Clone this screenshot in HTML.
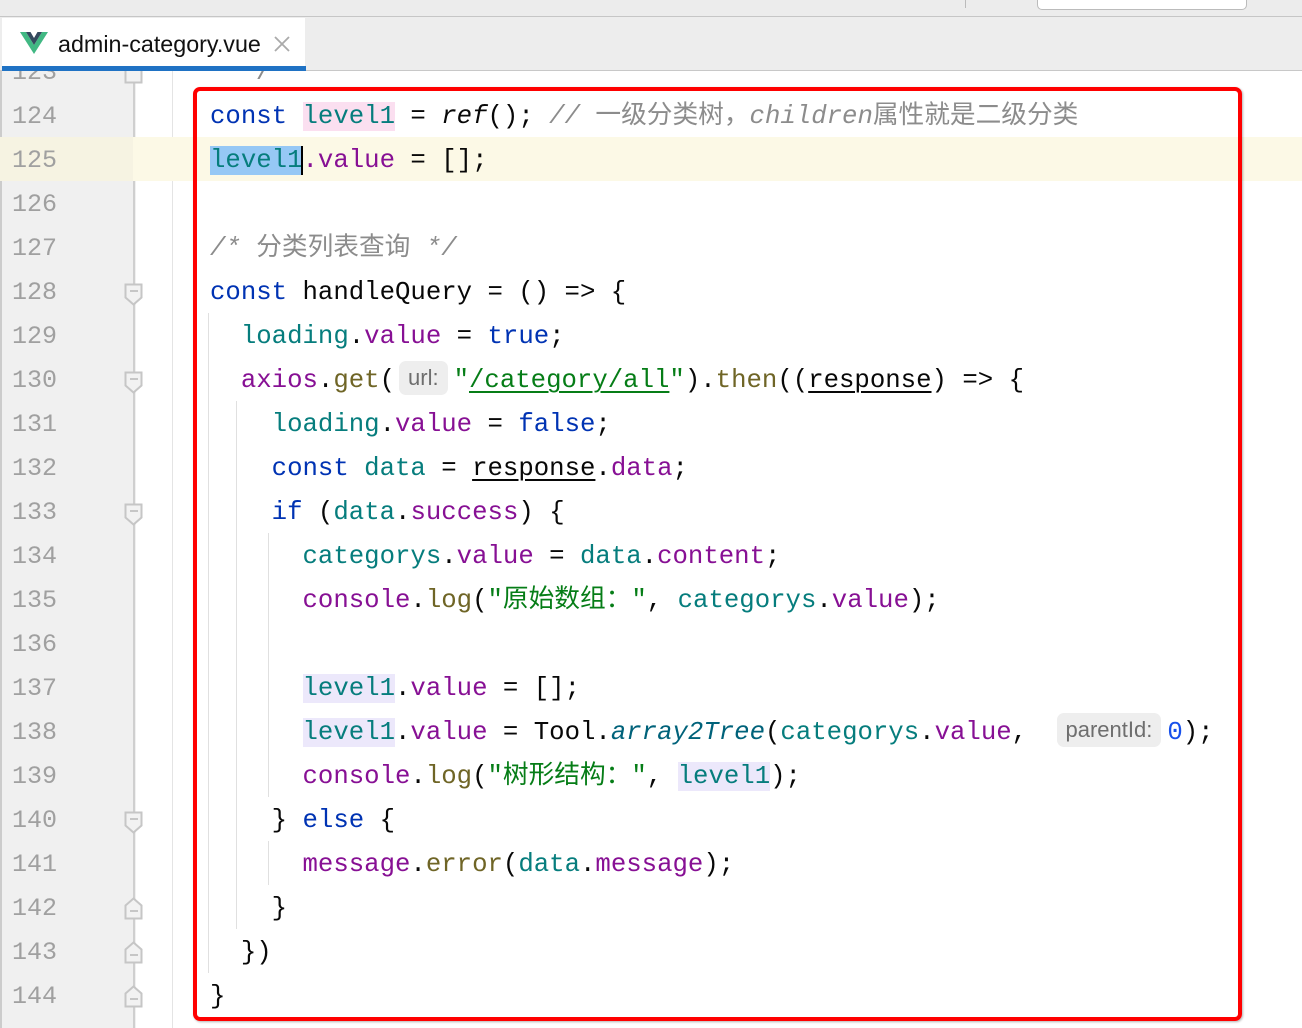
<!DOCTYPE html>
<html><head><meta charset="utf-8"><style>
body{margin:0;width:1302px;height:1028px;overflow:hidden;background:#fff;position:relative;font-family:"Liberation Mono","Noto Sans CJK SC",monospace;}
.a{position:absolute}
.ln{position:absolute;left:12px;width:60px;font-size:25px;color:#a0a0a0;line-height:44px;height:44px}
.c{position:absolute;left:210px;white-space:pre;font-size:25.7px;line-height:44px;height:44px;color:#080808}
.k{color:#0033b3}.t{color:#067d7d}.p{color:#871094}.f{color:#6f6526}.s{color:#067d17}.cm{color:#8c8c8c;font-style:italic}.cm b{font-weight:normal;font-style:normal}.i{font-style:italic}.n{color:#1750eb}
.h{display:inline-block;font-family:"Liberation Sans",sans-serif;font-size:22px;color:#6e6e6e;background:#eeeeee;border-radius:7px;line-height:34px;padding:0 9px;vertical-align:2px;margin:0 6px 0 4px}
.u{text-decoration:underline;text-decoration-thickness:2px;text-underline-offset:4px}
.g{position:absolute;width:1px;background:#e0e0e0}
.fd{position:absolute;left:124px}
</style></head><body>
<!-- editor -->
<div class="a" style="left:0;top:71px;width:134px;height:957px;background:#f0f0f0;border-left:2px solid #ccc"></div>
<div class="a" style="left:133px;top:71px;width:2px;height:957px;background:#cfcfcf"></div>
<div class="a" style="left:172px;top:71px;width:1px;height:957px;background:#e4e4e4"></div>
<div class="a" style="left:0;top:137px;width:1302px;height:44px;background:#fcf9e6"></div>
<div class="a" style="left:0;top:137px;width:133px;height:44px;background:#f6f3e2"></div>
<div class="ln" style="top:51px">123</div>
<div class="ln" style="top:95px">124</div><div class="ln" style="top:139px">125</div><div class="ln" style="top:183px">126</div><div class="ln" style="top:227px">127</div><div class="ln" style="top:271px">128</div><div class="ln" style="top:315px">129</div><div class="ln" style="top:359px">130</div><div class="ln" style="top:403px">131</div><div class="ln" style="top:447px">132</div><div class="ln" style="top:491px">133</div><div class="ln" style="top:535px">134</div><div class="ln" style="top:579px">135</div><div class="ln" style="top:623px">136</div><div class="ln" style="top:667px">137</div><div class="ln" style="top:711px">138</div><div class="ln" style="top:755px">139</div><div class="ln" style="top:799px">140</div><div class="ln" style="top:843px">141</div><div class="ln" style="top:887px">142</div><div class="ln" style="top:931px">143</div><div class="ln" style="top:975px">144</div>
<svg class="fd" style="top:283px" width="20" height="24"><path d="M1.5 1.5h16v13l-8 7-8-7z" fill="#f2f2f2" stroke="#c6c6c6" stroke-width="2"/><path d="M6 8h8" stroke="#c6c6c6" stroke-width="2"/></svg>
<svg class="fd" style="top:371px" width="20" height="24"><path d="M1.5 1.5h16v13l-8 7-8-7z" fill="#f2f2f2" stroke="#c6c6c6" stroke-width="2"/><path d="M6 8h8" stroke="#c6c6c6" stroke-width="2"/></svg>
<svg class="fd" style="top:503px" width="20" height="24"><path d="M1.5 1.5h16v13l-8 7-8-7z" fill="#f2f2f2" stroke="#c6c6c6" stroke-width="2"/><path d="M6 8h8" stroke="#c6c6c6" stroke-width="2"/></svg>
<svg class="fd" style="top:811px" width="20" height="24"><path d="M1.5 1.5h16v13l-8 7-8-7z" fill="#f2f2f2" stroke="#c6c6c6" stroke-width="2"/><path d="M6 8h8" stroke="#c6c6c6" stroke-width="2"/></svg>
<svg class="fd" style="top:896px" width="20" height="24"><path d="M1.5 22.5h16v-13l-8-7-8 7z" fill="#f2f2f2" stroke="#c6c6c6" stroke-width="2"/><path d="M6 15h8" stroke="#c6c6c6" stroke-width="2"/></svg>
<svg class="fd" style="top:940px" width="20" height="24"><path d="M1.5 22.5h16v-13l-8-7-8 7z" fill="#f2f2f2" stroke="#c6c6c6" stroke-width="2"/><path d="M6 15h8" stroke="#c6c6c6" stroke-width="2"/></svg>
<svg class="fd" style="top:984px" width="20" height="24"><path d="M1.5 22.5h16v-13l-8-7-8 7z" fill="#f2f2f2" stroke="#c6c6c6" stroke-width="2"/><path d="M6 15h8" stroke="#c6c6c6" stroke-width="2"/></svg>
<svg class="fd" style="top:60px" width="20" height="24"><path d="M1.5 22.5h16v-13l-8-7-8 7z" fill="#f2f2f2" stroke="#c6c6c6" stroke-width="2"/></svg>
<!-- indent guides -->
<div class="g" style="left:208px;top:313px;height:660px"></div>
<div class="g" style="left:236px;top:401px;height:528px"></div>
<div class="g" style="left:268px;top:533px;height:264px"></div>
<div class="g" style="left:268px;top:841px;height:44px"></div>
<!-- code -->
<div class="c" style="top:51px;left:225px;color:#8c8c8c"> */</div>
<div class="c" style="top:95px"><span class="k">const</span> <span class="t" style="background:#fbdff0">level1</span> = <span class="i">ref</span>(); <span class="cm">// <b>一级分类树，</b>children<b>属性就是二级分类</b></span></div>
<div class="c" style="top:139px"><span class="t" style="background:#96c8f5">level1</span><span style="border-left:2px solid #000;margin-left:-2px"></span><span class="p">.value</span> = [];</div>
<div class="c cm" style="top:227px">/* <b>分类列表查询</b> */</div>
<div class="c" style="top:271px"><span class="k">const</span> handleQuery = () =&gt; {</div>
<div class="c" style="top:315px">  <span class="t">loading</span>.<span class="p">value</span> = <span class="k">true</span>;</div>
<div class="c" style="top:359px">  <span class="p">axios</span>.<span class="f">get</span>(<span class="h">url:</span><span class="s">"<span class="u">/category/all</span>"</span>).<span class="f">then</span>((<span class="u">response</span>) =&gt; {</div>
<div class="c" style="top:403px">    <span class="t">loading</span>.<span class="p">value</span> = <span class="k">false</span>;</div>
<div class="c" style="top:447px">    <span class="k">const</span> <span class="t">data</span> = <span class="u">response</span>.<span class="p">data</span>;</div>
<div class="c" style="top:491px">    <span class="k">if</span> (<span class="t">data</span>.<span class="p">success</span>) {</div>
<div class="c" style="top:535px">      <span class="t">categorys</span>.<span class="p">value</span> = <span class="t">data</span>.<span class="p">content</span>;</div>
<div class="c" style="top:579px">      <span class="p">console</span>.<span class="f">log</span>(<span class="s">"原始数组："</span>, <span class="t">categorys</span>.<span class="p">value</span>);</div>
<div class="c" style="top:667px">      <span class="t" style="background:#ece8fb">level1</span>.<span class="p">value</span> = [];</div>
<div class="c" style="top:711px">      <span class="t" style="background:#ece8fb">level1</span>.<span class="p">value</span> = Tool.<span class="i" style="color:#00627a">array2Tree</span>(<span class="t">categorys</span>.<span class="p">value</span>, <span class="h" style="margin-left:14px">parentId:</span><span class="n">0</span>);</div>
<div class="c" style="top:755px">      <span class="p">console</span>.<span class="f">log</span>(<span class="s">"树形结构："</span>, <span class="t" style="background:#ece8fb">level1</span>);</div>
<div class="c" style="top:799px">    } <span class="k">else</span> {</div>
<div class="c" style="top:843px">      <span class="p">message</span>.<span class="f">error</span>(<span class="t">data</span>.<span class="p">message</span>);</div>
<div class="c" style="top:887px">    }</div>
<div class="c" style="top:931px">  })</div>
<div class="c" style="top:975px">}</div>
<div class="a" style="left:193px;top:87px;width:1041px;height:926px;border:4px solid #f00;border-radius:7px;box-shadow:1px 1px 2px rgba(0,0,0,.3)"></div>
<!-- top bars -->
<div class="a" style="left:0;top:0;width:1302px;height:16px;background:#ececec;border-bottom:1px solid #c6c6c6"></div>
<div class="a" style="left:965px;top:0;width:1px;height:8px;background:#bbb"></div>
<div class="a" style="left:1037px;top:-6px;width:208px;height:14px;border:1.5px solid #bbb;border-radius:5px;background:#fff"></div>
<div class="a" style="left:0;top:17px;width:1302px;height:53px;background:#ededed;border-bottom:1px solid #c8c8c8"></div>
<div class="a" style="left:2px;top:18px;width:303px;height:49px;background:#fff"></div>
<div class="a" style="left:2px;top:66px;width:304px;height:5px;background:#1f72c4"></div>
<svg class="a" style="left:20px;top:32px" width="28" height="22" viewBox="0 0 28 22"><path d="M0 0h6l8 13 8-13h6L14 22z" fill="#41b883"/><path d="M6 0h4.5l3.5 6 3.5-6H22l-8 13z" fill="#34495e"/></svg>
<div class="a" style="left:58px;top:29px;font-family:'Liberation Sans',sans-serif;font-size:23.3px;color:#111;line-height:30px">admin-category.vue</div>
<svg class="a" style="left:274px;top:36px" width="16" height="16"><path d="M1 1l14 14M15 1L1 15" stroke="#aaa" stroke-width="1.8"/></svg>
</body></html>
